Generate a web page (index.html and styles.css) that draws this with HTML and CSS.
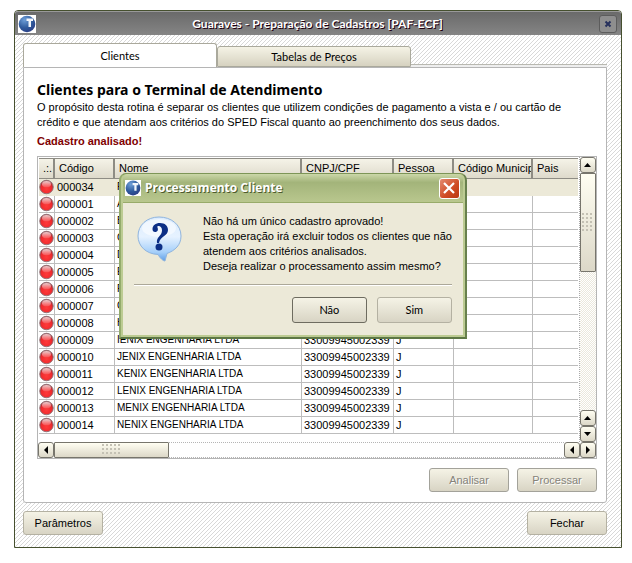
FILE: index.html
```html
<!DOCTYPE html>
<html lang="pt-BR">
<head>
<meta charset="utf-8">
<title>Guaraves - Preparação de Cadastros [PAF-ECF]</title>
<link rel="stylesheet" href="styles.css">
</head>
<body>
<svg class="defs" width="0" height="0" aria-hidden="true">
  <defs>
    <radialGradient id="globe" cx="0.35" cy="0.25" r="0.8">
      <stop offset="0" stop-color="#6f9fd8"/><stop offset="0.6" stop-color="#2f5a9c"/><stop offset="1" stop-color="#2b3f86"/>
    </radialGradient>
    <radialGradient id="ball" cx="0.5" cy="0.65" r="0.6">
      <stop offset="0" stop-color="#ff3a3a"/><stop offset="0.65" stop-color="#ee2a2e"/><stop offset="1" stop-color="#a83238"/>
    </radialGradient>
    <linearGradient id="shine" x1="0" y1="0" x2="0" y2="1">
      <stop offset="0" stop-color="#fff" stop-opacity="0.75"/><stop offset="1" stop-color="#fff" stop-opacity="0.15"/>
    </linearGradient>
    <linearGradient id="bubble" x1="0" y1="0" x2="0" y2="1">
      <stop offset="0" stop-color="#dcecfd"/><stop offset="0.45" stop-color="#e6f2ff"/><stop offset="0.8" stop-color="#a5cffa"/><stop offset="1" stop-color="#5f9ee6"/>
    </linearGradient>
    <symbol id="logo" viewBox="0 0 18 18">
      <rect width="18" height="18" fill="#fff"/>
      <circle cx="9" cy="9" r="8.3" fill="url(#globe)"/>
      <path d="M8.500 3.500H15v2.500h-2v6h-2.500V6h-2z" fill="#f2f5fb"/>
    </symbol>
    <symbol id="led" viewBox="0 0 16 16">
      <circle cx="8" cy="8" r="7.200" fill="url(#ball)" stroke="#8d7176"/>
      <ellipse cx="8" cy="5" rx="4.800" ry="3.300" fill="url(#shine)"/>
    </symbol>
  </defs>
</svg>
<main class="window">
  <header class="titlebar">
    <svg class="logo"><use href="#logo"/></svg>
    <h1>Guaraves - Preparação de Cadastros [PAF-ECF]</h1>
    <button class="close" aria-label="Fechar janela"><svg viewBox="0 0 8 8"><path d="M1.500 1.500l5 5M6.500 1.500l-5 5" stroke="#26305c" stroke-width="2"/></svg></button>
  </header>
  <div class="body">
    <div class="tabs" role="tablist">
      <button class="tab active" role="tab" aria-selected="true">Clientes</button>
      <button class="tab" role="tab" aria-selected="false">Tabelas de Preços</button>
      <span class="rail"></span>
    </div>
    <section class="panel" role="tabpanel">
      <h2>Clientes para o Terminal de Atendimento</h2>
      <p class="intro">O propósito desta rotina é separar os clientes que utilizem condições de pagamento a vista e / ou cartão de<br>crédito e que atendam aos critérios do SPED Fiscal quanto ao preenchimento dos seus dados.</p>
      <p class="status">Cadastro analisado!</p>
      <div class="browse">
        <div class="viewport">
          <table>
            <colgroup><col class="c-led"><col class="c-cod"><col class="c-nome"><col class="c-cnpj"><col class="c-pes"><col class="c-mun"><col></colgroup>
            <thead><tr><th>.:.</th><th>Código</th><th>Nome</th><th>CNPJ/CPF</th><th>Pessoa</th><th>Código Municipio</th><th>Pais</th></tr></thead>
            <tbody>
              <tr class="selected"><td><svg class="led"><use href="#led"/></svg></td><td>000034</td><td>FENIX ENGENHARIA LTDA</td><td>33009945002339</td><td>J</td><td></td><td></td></tr>
              <tr><td><svg class="led"><use href="#led"/></svg></td><td>000001</td><td>AENIX ENGENHARIA LTDA</td><td>33009945002339</td><td>J</td><td></td><td></td></tr>
              <tr><td><svg class="led"><use href="#led"/></svg></td><td>000002</td><td>BENIX ENGENHARIA LTDA</td><td>33009945002339</td><td>J</td><td></td><td></td></tr>
              <tr><td><svg class="led"><use href="#led"/></svg></td><td>000003</td><td>CENIX ENGENHARIA LTDA</td><td>33009945002339</td><td>J</td><td></td><td></td></tr>
              <tr><td><svg class="led"><use href="#led"/></svg></td><td>000004</td><td>DENIX ENGENHARIA LTDA</td><td>33009945002339</td><td>J</td><td></td><td></td></tr>
              <tr><td><svg class="led"><use href="#led"/></svg></td><td>000005</td><td>EENIX ENGENHARIA LTDA</td><td>33009945002339</td><td>J</td><td></td><td></td></tr>
              <tr><td><svg class="led"><use href="#led"/></svg></td><td>000006</td><td>FENIX ENGENHARIA LTDA</td><td>33009945002339</td><td>J</td><td></td><td></td></tr>
              <tr><td><svg class="led"><use href="#led"/></svg></td><td>000007</td><td>GENIX ENGENHARIA LTDA</td><td>33009945002339</td><td>J</td><td></td><td></td></tr>
              <tr><td><svg class="led"><use href="#led"/></svg></td><td>000008</td><td>HENIX ENGENHARIA LTDA</td><td>33009945002339</td><td>J</td><td></td><td></td></tr>
              <tr><td><svg class="led"><use href="#led"/></svg></td><td>000009</td><td>IENIX ENGENHARIA LTDA</td><td>33009945002339</td><td>J</td><td></td><td></td></tr>
              <tr><td><svg class="led"><use href="#led"/></svg></td><td>000010</td><td>JENIX ENGENHARIA LTDA</td><td>33009945002339</td><td>J</td><td></td><td></td></tr>
              <tr><td><svg class="led"><use href="#led"/></svg></td><td>000011</td><td>KENIX ENGENHARIA LTDA</td><td>33009945002339</td><td>J</td><td></td><td></td></tr>
              <tr><td><svg class="led"><use href="#led"/></svg></td><td>000012</td><td>LENIX ENGENHARIA LTDA</td><td>33009945002339</td><td>J</td><td></td><td></td></tr>
              <tr><td><svg class="led"><use href="#led"/></svg></td><td>000013</td><td>MENIX ENGENHARIA LTDA</td><td>33009945002339</td><td>J</td><td></td><td></td></tr>
              <tr><td><svg class="led"><use href="#led"/></svg></td><td>000014</td><td>NENIX ENGENHARIA LTDA</td><td>33009945002339</td><td>J</td><td></td><td></td></tr>
            </tbody>
          </table>
        </div>
        <div class="vscroll">
          <button class="arrow" aria-label="Subir"><svg viewBox="0 0 8 8"><path d="M0 6h7L3.500 2z"/></svg></button>
          <div class="thumb"><span class="grip"></span></div>
          <div class="track"></div>
          <button class="arrow" aria-label="Linha acima"><svg viewBox="0 0 8 8"><path d="M0 6h7L3.500 2z"/></svg></button>
          <button class="arrow" aria-label="Linha abaixo"><svg viewBox="0 0 8 8"><path d="M0 2h7L3.500 6z"/></svg></button>
        </div>
        <div class="hscroll">
          <button class="arrow" aria-label="Esquerda"><svg viewBox="0 0 8 8"><path d="M6 0v8L2 4z"/></svg></button>
          <div class="thumb"><span class="grip"></span></div>
          <div class="track"></div>
          <button class="arrow" aria-label="Coluna anterior"><svg viewBox="0 0 8 8"><path d="M6 0v8L2 4z"/></svg></button>
          <button class="arrow" aria-label="Próxima coluna"><svg viewBox="0 0 8 8"><path d="M2 0v8l4-4z"/></svg></button>
        </div>
      </div>
      <div class="actions">
        <button class="btn" disabled>Analisar</button>
        <button class="btn" disabled>Processar</button>
      </div>
    </section>
    <footer class="footer">
      <button class="btn">Parâmetros</button>
      <button class="btn">Fechar</button>
    </footer>
  </div>
  <div class="dialog" role="dialog" aria-labelledby="dialog-title">
    <header class="dialog-bar">
      <svg class="logo"><use href="#logo"/></svg>
      <h2 id="dialog-title">Processamento Cliente</h2>
      <button class="dialog-close" aria-label="Fechar"><svg viewBox="0 0 12 12"><path d="M1 1l10 10M11 1L1 11" stroke="#fff" stroke-width="2.200"/></svg></button>
    </header>
    <div class="dialog-body">
      <div class="message">
        <svg class="question" viewBox="0 0 46 46" aria-hidden="true">
          <path d="M22 1C34 1 44 8.500 44 20c0 9-6 14.500-14 17.500L28 45c-2 0-5-3-7-6.500C9 38 1 30 1 20 1 9 10 1 22 1z" fill="url(#bubble)" stroke="#8fb4de"/>
          <ellipse cx="22" cy="12" rx="17" ry="9" fill="#fff" opacity="0.55"/>
          <path d="M20 27c-1-6 5-7 5-12.500 0-3-1.500-4.500-3.500-4.500-1 0-1.500.6-1 1.500 1.200 3-.5 4.500-2.300 4.500-1.800 0-2.700-1.200-2.700-2.800C15.500 9.500 18.500 7 23 7c5 0 8 2.800 8 7 0 6-8 6.500-9 13z" fill="#0c2f86"/>
          <circle cx="22" cy="31" r="3.500" fill="#0c2f86"/>
        </svg>
        <p>Não há um único cadastro aprovado!<br>Esta operação irá excluir todos os clientes que não<br>atendem aos critérios analisados.<br>Deseja realizar o processamento assim mesmo?</p>
      </div>
      <div class="choices">
        <button class="btn default">Não</button>
        <button class="btn">Sim</button>
      </div>
    </div>
  </div>
</main>
</body>
</html>
```
FILE: styles.css
```css
* { box-sizing: border-box; }
body {
  margin: 0;
  padding: 10px 10px 16px 14px;
  background: #fff;
  color: #000;
  font: 11px/15px "Liberation Sans", Arial, sans-serif;
}
h1, h2, p { margin: 0; }
button { font: inherit; color: inherit; margin: 0; padding: 0; }
.defs { position: absolute; }
.logo { width: 18px; height: 18px; flex: none; }

.window {
  position: relative;
  border: 1px solid #46502f;
  border-radius: 4px 4px 0 0;
  background: linear-gradient(135deg, #fff 40%, #d8d8d8 50%, #fff 60%) 0 0 / 4px 4px;
}
.titlebar {
  display: flex;
  align-items: center;
  height: 24px;
  padding: 0 4px 0 3px;
  border-radius: 3px 3px 0 0;
  border-top: 1px solid #999;
  background: linear-gradient(#6a6a6a, #858585);
}
.titlebar h1 {
  flex: 1;
  text-align: center;
  font: bold 12px/16px Lato, sans-serif;
  color: #fff;
  text-shadow: 1px 1px 0 #200010;
}
.close {
  width: 18px;
  height: 18px;
  border: 1px solid #5c5c5c;
  border-radius: 3px;
  background: #8e8e8e;
}
.close svg { display: block; width: 8px; height: 8px; margin: auto; }

.body { padding: 8px 14px 12px 8px; }
.tabs { display: flex; align-items: flex-end; height: 24px; }
.tab {
  width: 194px;
  height: 21px;
  border: 1px solid #aaa99c;
  border-radius: 3px 3px 0 0;
  background: linear-gradient(#f5f3e6, #d6d2c0);
  font: 11px/16px Lato, sans-serif;
}
.tab.active { height: 24px; border-bottom: 0; background: #fff; }
.rail { flex: 1; height: 3px; border-top: 1px solid #b8b8b0; background: #eee; }

.panel {
  padding: 13px 9px 10px 13px;
  border: 1px solid #b5b5b5;
  border-radius: 0 0 3px 3px;
  background: #fff;
}
.panel h2 { font: bold 14px/18px "Noto Sans", sans-serif; }
.intro { margin: 1px 0 4px; }
.status { font-weight: bold; color: #800000; }

.browse {
  display: grid;
  grid-template-columns: 1fr 17px;
  margin-top: 7px;
  border: 1px solid #b5b5b5;
}
.viewport { padding: 1px 1px 8px; overflow: hidden; }
table { width: 100%; table-layout: fixed; border-collapse: separate; border-spacing: 0; }
.c-led { width: 16px; }
.c-cod, .c-pes { width: 60px; }
.c-nome { width: 187px; }
.c-cnpj { width: 92px; }
.c-mun { width: 79px; }
th, td { overflow: hidden; white-space: nowrap; text-align: left; font-weight: normal; }
th {
  height: 21px;
  padding: 0 0 0 4px;
  border: solid #8e8c84;
  border-width: 1px 2px 1px 0;
  background: linear-gradient(#f5f3e8, #dedacb);
}
td {
  height: 17px;
  padding: 0 0 0 2px;
  line-height: 16px;
  border: solid #bdbdbd;
  border-width: 0 1px 1px 0;
}
td:nth-child(3) { font-size: 10px; }
th:last-child, td:last-child { border-right: 0; }
td:first-child { padding: 0; }
.selected td { background: #ece9d8; border-color: #ece9d8; }
.led { display: block; width: 15px; height: 16px; }

.arrow, .thumb {
  flex: none;
  display: flex;
  align-items: center;
  justify-content: center;
  border: 1px solid #77756c;
  border-radius: 3px;
  background: linear-gradient(#fffef2, #dcd8c8);
}
.arrow { width: 16px; height: 16px; }
.arrow svg { width: 8px; height: 8px; }
.thumb { border-radius: 1px; }
.vscroll { display: flex; flex-direction: column; border-left: 1px dotted #aaa; }
.vscroll .thumb { height: 99px; width: 16px; }
.vscroll .grip { width: 12px; height: 20px; }
.track { flex: 1; }
.vscroll .track { background: repeating-conic-gradient(#ebe8dc 0 25%, #fff 0 50%) 0 0 / 2px 2px; }
.hscroll { grid-column: 1 / -1; display: flex; }
.hscroll .track { border: dotted #b5b5b5; border-width: 1px 0; }
.hscroll .thumb { width: 115px; height: 16px; }
.grip { width: 20px; height: 12px; background: radial-gradient(circle at 1px 1px, #c4c1b4 1px, transparent 1px) 0 0 / 4px 4px; }

.btn {
  width: 80px;
  height: 24px;
  border: 1px solid #b4b1a2;
  border-radius: 3px;
  background: linear-gradient(#f5f3e6, #d8d4c4);
}
.btn:disabled { border-color: #a3a29a; color: #85837a; text-shadow: 1px 1px 0 #fff; }
.actions { display: flex; justify-content: flex-end; gap: 8px; margin-top: 9px; }
.footer { display: flex; justify-content: space-between; margin-top: 8px; }

.dialog {
  position: absolute;
  left: 104px;
  top: 162px;
  border: solid #8fa667;
  border-width: 1px 2px 2px;
  border-color: #7d9557 #68804d #5d7745 #94ab6c;
  border-radius: 7px 7px 0 0;
  background: #bccb92;
  padding: 0 2px 2px;
}
.dialog-bar {
  display: flex;
  align-items: center;
  height: 29px;
  padding: 0 3px 0 2px;
  border-bottom: 1px solid #98ab6a;
  border-radius: 5px 5px 0 0;
  background: linear-gradient(#cbd7a8, #a3b47a 30%, #b9c78e);
}
.dialog-bar .logo { width: 16px; height: 16px; }
.dialog-bar h2 {
  flex: 1;
  padding-left: 4px;
  font: bold 12px/18px "Open Sans", sans-serif;
  color: #fff;
  text-shadow: 1px 1px 0 #4c5a2c;
}
.dialog-close {
  width: 21px;
  height: 21px;
  border: 1px solid #fff;
  border-radius: 3px;
  background: linear-gradient(135deg, #e48a70, #cf4a22 60%, #b83a14);
}
.dialog-close svg { display: block; width: 12px; height: 12px; margin: auto; }
.dialog-body { padding: 11px 11px 12px; background: #ece9d8; }
.message {
  display: flex;
  gap: 20px;
  padding-bottom: 10px;
  border-bottom: 1px solid #aca899;
  box-shadow: 0 1px 0 #fff;
}
.message p { white-space: nowrap; }
.question { flex: none; width: 46px; height: 46px; margin: 2px 0 0 3px; }
.choices { display: flex; justify-content: flex-end; gap: 10px; margin-top: 12px; }
.choices .btn { width: 75px; height: 26px; font: 11px/16px Lato, sans-serif; }
.btn.default { border-color: #6e6c60; }
```
